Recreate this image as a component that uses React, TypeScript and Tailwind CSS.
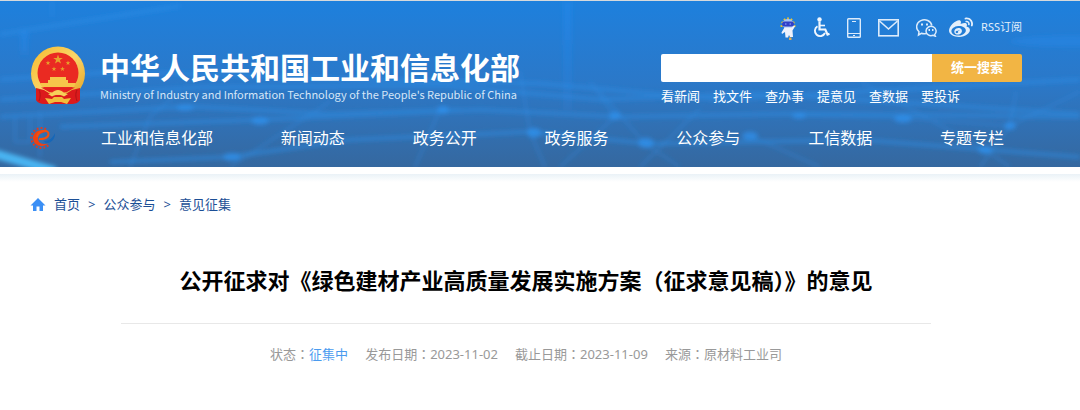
import React from "react";
import { FaWeibo } from "react-icons/fa";

const quickLinks = ["看新闻", "找文件", "查办事", "提意见", "查数据", "要投诉"];

const navItems = [
  "工业和信息化部",
  "新闻动态",
  "政务公开",
  "政务服务",
  "公众参与",
  "工信数据",
  "专题专栏",
];

const STAR = "M0-5 1.2-1.6 4.8-1.6 1.9.6 3 4 0 1.9-3 4-1.9.6-4.8-1.6-1.2-1.6Z";

function NationalEmblem() {
  return (
    <svg width="56" height="59" viewBox="0 0 56 59" aria-hidden="true">
      <defs>
        <linearGradient id="gold" x1="0" y1="0" x2="1" y2="1">
          <stop offset="0" stopColor="#f6b92c" />
          <stop offset="0.5" stopColor="#f9d568" />
          <stop offset="1" stopColor="#e3a01f" />
        </linearGradient>
      </defs>
      <path d="M7 41 6 54c2 3 5 4 9 4h26c4 0 7-1 9-4l-1-13Z" fill="#dc1a1c" />
      <circle cx="28" cy="27.500" r="27" fill="url(#gold)" />
      <circle cx="28" cy="27" r="20.500" fill="#ea2a22" />
      <g fill="#e8a22c">
        <path d={STAR} transform="translate(28 13.500)" />
        <path d={STAR} transform="translate(18 17) scale(.5)" />
        <path d={STAR} transform="translate(38 17) scale(.5)" />
        <path d={STAR} transform="translate(24 23) scale(.5)" />
        <path d={STAR} transform="translate(32.500 23) scale(.5)" />
      </g>
      <path d="M20 31h16v3h2v3h8l-2 4H12l-2-4h8v-3h2Z" fill="#f6c64a" />
      <path d="M6 42 14 44 22 49h12l8-5 8-2v12c-5 4-10 4-14 4H20c-5 0-10 0-14-4Z" fill="#dc1a1c" />
      <path d="M11 41.500h34l-9 5-4-3h-8l-4 3Z" fill="#e5221e" />
      <path d="M18 48c5 0 5-4 10-4s5 4 10 4l-4 2.500c-4-2.500-8-2.500-12 0Z" fill="#f7d05a" />
      <path d="m15 52 7 1 2-2h8l2 2 7-1-4 6-6-2h-6l-6 2Z" fill="#f2bd3c" />
      <path d="M9 44c2 4 1 8 0 11M47 44c-2 4-1 8 0 11" stroke="#b01216" fill="none" />
    </svg>
  );
}

function GearLogo() {
  return (
    <svg width="26" height="24" viewBox="0 0 26 24" fill="none" aria-hidden="true">
      {/* teeth, then the ring that runs into the letter */}
      <path
        d="M16 3.200A10 10 0 1 0 18.500 19"
        stroke="#e23a1c"
        strokeWidth="2"
        strokeDasharray="1.800 2"
      />
      <path
        d="M14 4.500C8 3 3 7 3 12c0 5 4 8 8.500 8 3 0 5-1 6.500-2.500-5 1.500-10 0-10-5C8 9 11 6.500 15 6.500Z"
        fill="#ee4213"
      />
      <path
        d="M9 13c4 .5 9-1 9.500-4.500C19 5.500 16 4.500 13 5c-3 .6-5.500 3-6 6"
        stroke="#f2500f"
        strokeWidth="2"
      />
      <path d="M14 15c5 0 9-3 11-8 .5 5-3 9-7 10-2 .4-3.500-.5-4-2Z" fill="#1667b8" />
    </svg>
  );
}

function RobotIcon() {
  return (
    <svg width="16" height="24" viewBox="0 0 16 24" aria-hidden="true">
      <path
        d="M1.500 11a6.500 8.500 0 1 1 13 0"
        stroke="#efc52c"
        strokeWidth="2"
        strokeDasharray="1.800 1.800"
        fill="none"
      />
      <ellipse cx="8" cy="8" rx="5.500" ry="5" fill="#a9c6f2" />
      <rect x="2" y="5.500" width="12" height="5" rx="2.500" fill="#3040c8" />
      <path d="M5 8h1.500M9.500 8H11" stroke="#9eb2ff" />
      <path d="M4.500 11.500h7L14 9.500l1 1-2.500 4 .5 6.500h-3l-1-2-1 2.500H5.500L5 16l-3 2-.5-1.500Z" fill="#eef2fc" />
      <path d="M9 21.500h2.500V24H9Z" fill="#e5ab4e" />
    </svg>
  );
}

function WheelchairIcon() {
  return (
    <svg width="17" height="21" viewBox="0 0 17 21" fill="none" stroke="#f1f7fe" aria-hidden="true">
      <circle cx="6.500" cy="2.500" r="2.200" fill="#f1f7fe" stroke="none" />
      <path d="M6.500 4.500v8h5.800l2.200 5 2-.8" strokeWidth="2.200" />
      <path d="M7 8.500h5" strokeWidth="1.600" />
      <path d="M4.500 9.200A5.300 5.300 0 1 0 12 16" strokeWidth="1.900" />
    </svg>
  );
}

function PhoneIcon() {
  return (
    <svg width="14" height="20" viewBox="0 0 14 20" fill="none" stroke="#dcebfb" aria-hidden="true">
      <rect x=".7" y=".7" width="12.600" height="18.600" rx=".8" strokeWidth="1.400" />
      <path d="M5 3.500h4M1 15.500h12M6 17.500h2" />
    </svg>
  );
}

function MailIcon() {
  return (
    <svg width="21" height="18" viewBox="0 0 21 18" fill="none" stroke="#dcebfb" strokeWidth="1.600" aria-hidden="true">
      <rect x=".8" y=".8" width="19.400" height="16" />
      <path d="m1.500 2 9 8 9-8" />
    </svg>
  );
}

function WechatIcon() {
  return (
    <svg width="21" height="18" viewBox="0 0 21 18" fill="none" stroke="#dcebfb" strokeWidth="1.500" aria-hidden="true">
      <path d="M10 14.500c-1.500.4-3.200.3-4.600-.2L2.500 16l.5-3.200C-.8 9.500.2 3.500 4.800 1.600 9.500-.4 15 1.800 15.800 6.500" />
      <path d="M18.600 15.700c2.400-2.300 1.900-6.300-1.200-7.800-3.300-1.600-7.400.4-7.400 4.100 0 3.600 3.800 5.500 7 4.300l2.300.9Z" />
      <path d="M5 5.500h2M10 5.500h2M12.500 11h1.500M16 11h1.500" strokeWidth="1.800" />
    </svg>
  );
}

// light trails and nodes behind the header
function HeaderBackdrop() {
  return (
    <svg
      className="absolute inset-0 h-full w-full"
      viewBox="0 0 1080 165"
      preserveAspectRatio="none"
      aria-hidden="true"
    >
      <defs>
        <filter id="soft" x="-20%" y="-50%" width="140%" height="200%">
          <feGaussianBlur stdDeviation="2" />
        </filter>
        <linearGradient id="beam" x1="0" y1="0" x2="0" y2="1">
          <stop offset="0" stopColor="#2389ec" stopOpacity="0.7" />
          <stop offset="1" stopColor="#2389ec" stopOpacity="0.2" />
        </linearGradient>
      </defs>
      <g filter="url(#soft)" fill="none" stroke="#2f8fe8">
        <g strokeWidth="4" opacity="0.5">
          <path d="M0 33 180 5M0 78 120 70 360 78 540 82 720 98 1080 78" />
          <path d="M0 98 200 86 440 84 600 98 760 92 1080 112" />
          <path d="M60 125 260 118 480 108 620 115 800 112 1080 115" />
          <path d="M0 115 190 105 330 112 460 108" />
          <path d="M110 160 230 155 350 138 530 130 650 142 860 138 1080 155" />
        </g>
        <g strokeWidth="2" opacity="0.4">
          <path d="M520 70 530 130 545 165M600 90 645 142 680 165M590 80 615 115 560 165" />
          <path d="M700 107 640 165M750 134 820 165M800 114 900 116 1010 124 1080 90" />
          <path d="M440 108 415 165M860 80 985 148 1010 165M1010 124 980 165" />
          <path d="M1016 90 1010 124M130 165 150 115 180 90M330 100 230 165" />
          <path d="M15 115v25h15v-25M40 110v45M52 0v16M24 30v20" />
        </g>
        <g fill="#2f92ef" stroke="none" opacity="0.7">
          <ellipse cx="443" cy="108" rx="6" ry="4" />
          <ellipse cx="534" cy="131" rx="7" ry="5" />
          <ellipse cx="615" cy="114" rx="6" ry="4" />
          <ellipse cx="646" cy="141" rx="8" ry="5" />
          <ellipse cx="750" cy="134" rx="8" ry="4" />
          <ellipse cx="799" cy="114" rx="7" ry="3" />
          <ellipse cx="903" cy="117" rx="9" ry="4" />
          <ellipse cx="1010" cy="124" rx="6" ry="4" />
          <ellipse cx="985" cy="148" rx="7" ry="4" />
          <ellipse cx="260" cy="119" rx="9" ry="4" />
          <ellipse cx="185" cy="106" rx="9" ry="3" />
          <ellipse cx="232" cy="155" rx="9" ry="4" />
        </g>
        <ellipse cx="1070" cy="40" rx="60" ry="6" fill="#2389ec" stroke="none" opacity="0.4" />
        <path d="M-5 152 55 169" stroke="#49b4f2" strokeWidth="9" />
        <rect x="563" width="9" height="108" fill="url(#beam)" stroke="none" opacity="0.7" />
        <rect x="20" y="30" width="9" height="25" fill="url(#beam)" stroke="none" opacity="0.6" />
      </g>
    </svg>
  );
}

function App() {
  return (
    <div className="min-h-screen bg-white font-['Noto_Sans','Noto_Sans_CJK_SC',sans-serif]">
      {/* Header */}
      <header className="relative border-t border-[#d5d9dc] bg-linear-to-b from-[#1d80dd] via-[#2b78c8] to-[#35689f] text-white">
        <HeaderBackdrop />
        <div className="relative pl-[30px] pr-[58px]">
          <div className="flex justify-between">
            {/* Logo */}
            <a href="#" className="flex gap-[14px] pt-[45px]">
              <NationalEmblem />
              <div className="whitespace-nowrap font-['Noto_Sans_CJK_SC',sans-serif]">
                <h1 className="text-[30px] font-bold leading-10">中华人民共和国工业和信息化部</h1>
                <p className="text-[11px] leading-4 text-[#d5e6f8]">
                  Ministry of Industry and Information Technology of the People's Republic of China
                </p>
              </div>
            </a>

            {/* Tools and search */}
            <div className="w-[361px]">
              <div className="flex h-[53px] items-center justify-end gap-[17px] text-[#e4effb]">
                <a href="#" aria-label="智能问答"><RobotIcon /></a>
                <a href="#" aria-label="无障碍"><WheelchairIcon /></a>
                <a href="#" aria-label="手机版"><PhoneIcon /></a>
                <a href="#" aria-label="邮箱"><MailIcon /></a>
                <div className="flex items-center gap-3">
                  <a href="#" aria-label="微信"><WechatIcon /></a>
                  <div className="flex items-center gap-2">
                    <a href="#" aria-label="微博"><FaWeibo size={24} /></a>
                    <a href="#" className="text-[11px]">RSS订阅</a>
                  </div>
                </div>
              </div>
              <form className="flex h-7 overflow-hidden rounded-xs">
                <input type="text" aria-label="搜索" className="min-w-0 flex-1 bg-white px-2 text-[13px] text-black outline-none" />
                <button type="button" className="w-[90px] bg-[#f2b544] text-[13px] font-bold">
                  统一搜索
                </button>
              </form>
              <div className="flex gap-[13px] whitespace-nowrap pt-1 text-[13px] leading-5">
                {quickLinks.map((item) => (
                  <a href="#" key={item}>{item}</a>
                ))}
              </div>
            </div>
          </div>

          {/* Navigation */}
          <nav className="flex items-center pb-[17px] pt-5">
            <a href="#" className="w-[71px] shrink-0" aria-label="首页">
              <GearLogo />
            </a>
            <div className="flex flex-1 justify-between whitespace-nowrap pr-[18px] text-base leading-6">
              {navItems.map((item) => (
                <a href="#" key={item}>{item}</a>
              ))}
            </div>
          </nav>
        </div>
      </header>

      <div className="mt-[7px] h-2 bg-linear-to-b from-[#eaf2f7] to-white" />

      <main className="pl-[30px] pr-[58px]">
        {/* Breadcrumb */}
        <div className="flex items-center gap-2 pt-3 text-[13px] leading-5 text-[#1c4f96]">
          <svg width="16" height="13" viewBox="0 0 16 13" fill="#3b8ff5" aria-hidden="true">
            <path d="M8 0 15.500 7.500H13V13H9.500V8.500H6.500V13H3V7.500H.5Z" />
          </svg>
          <a href="#">首页</a>
          <span>&gt;</span>
          <a href="#">公众参与</a>
          <span>&gt;</span>
          <a href="#">意见征集</a>
        </div>

        {/* Title */}
        <h2 className="pt-[50px] text-center text-[22px] font-bold leading-8 text-black">
          公开征求对《绿色建材产业高质量发展实施方案（征求意见稿）》的意见
        </h2>

        <hr className="mx-[91px] mt-[27px] border-[#e8e8e8]" />

        {/* Info */}
        <div className="flex justify-center gap-[17px] pt-5 font-['Noto_Sans','Noto_Sans_CJK_TC',sans-serif] text-[13px] leading-5 text-[#999999]">
          <span>
            状态：<span className="text-[#4a9bef]">征集中</span>
          </span>
          <span>发布日期：2023-11-02</span>
          <span>截止日期：2023-11-09</span>
          <span>来源：原材料工业司</span>
        </div>
      </main>
    </div>
  );
}

export default App;
